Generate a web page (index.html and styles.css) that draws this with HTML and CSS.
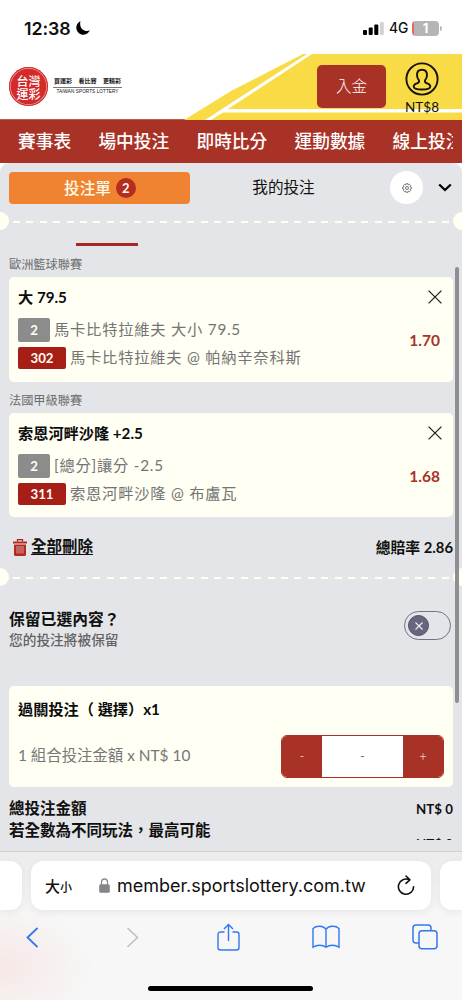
FILE: index.html
```html
<!DOCTYPE html>
<html lang="zh-Hant">
<head>
<meta charset="utf-8">
<title>台灣運彩</title>
<link rel="stylesheet" href="styles.css">
</head>
<body>
<div class="screen">
  <div class="status">
    <span class="clock">12:38</span>
    <svg class="moon" width="14" height="14" viewBox="0 0 14 14"><path d="M4.500.300A7 7 0 1 0 13.800 9.300C9.500 11.500 2.500 8 4.500.300Z"/></svg>
    <svg class="signal" width="21" height="14" viewBox="0 0 21 14"><rect y="9" width="4" height="5" rx="1"/><rect x="5.700" y="6.500" width="4" height="7.500" rx="1"/><rect x="11.300" y="3.500" width="4" height="10.500" rx="1"/><rect x="17" y="1" width="3.800" height="13" rx="1" fill="#d2d2d2"/></svg>
    <span class="net">4G</span>
    <span class="battery">1</span><span class="battery-cap"></span>
  </div>

  <header class="head">
    <svg class="head-bg" width="462" height="66" viewBox="0 0 462 66"><path d="M303 0H462V66H184L231 37Z" fill="#f9dc45"/><path d="M307 0H312L231 53L228 55H462V58.500H223L211 66H205Z" fill="#fff"/></svg>
    <div class="seal"><span>台灣</span><span>運彩</span></div>
    <div class="slogan"><div class="slogan-zh"><span>買運彩</span><span>看比賽</span><span>更精彩</span></div><div class="slogan-en">TAIWAN SPORTS LOTTERY</div></div>
    <button class="deposit">入金</button>
    <div class="account">
      <svg width="34" height="34" viewBox="0 0 34 34" fill="none" stroke="#15130b" stroke-width="1.900"><circle cx="17" cy="17" r="15.600"/><path d="M17 7.700c-3.100 0-5 2.200-5 5.300 0 2.700 1 4.200 2 5.400.4 1.600-.4 2.200-1.600 2.800-2 .9-3.700 1.400-3.700 3.300 0 2 4.300 3 8.300 3s8.300-1 8.300-3c0-1.900-1.700-2.400-3.700-3.300-1.200-.6-2-1.200-1.600-2.800 1-1.200 2-2.700 2-5.400 0-3.100-1.900-5.300-5-5.300Z"/></svg>
      <span>NT$8</span>
    </div>
  </header>

  <nav class="nav"><div class="nav-track"><span>賽事表</span><span>場中投注</span><span>即時比分</span><span>運動數據</span><span>線上投注</span></div></nav>

  <main class="panel">
    <div class="tabs">
      <div class="tab active">投注單<b class="count">2</b></div>
      <div class="tab">我的投注</div>
      <div class="gear"><svg width="10" height="10" viewBox="0 0 10 10" fill="none" stroke="#555" stroke-width=".8"><path d="M4.100.700h1.800l.3 1.200 1.200-.6 1.200 1.200-.6 1.200 1.300.4v1.800l-1.300.4.6 1.200-1.200 1.200-1.200-.6-.3 1.200H4.100l-.3-1.200-1.200.6-1.200-1.200.6-1.200L.7 5.900V4.100L2 3.700l-.6-1.200 1.200-1.200 1.200.6Z"/><circle cx="5" cy="5" r="1.500"/></svg></div>
      <svg class="chev" width="14" height="9" viewBox="0 0 14 9"><path d="M1.200 1.500 7 7 12.800 1.500" fill="none" stroke="#000" stroke-width="2.300"/></svg>
    </div>

    <div class="divider"><i></i></div>
    <div class="marker"></div>

    <div class="league">歐洲籃球聯賽</div>
    <section class="card bet">
      <div class="bet-info">
        <h3>大 79.5</h3>
        <div class="line"><b class="tag">2</b><span class="wide">馬卡比特拉維夫 大小 79.5</span></div>
        <div class="line"><b class="tag red">302</b><span class="wide">馬卡比特拉維夫 @ 帕納辛奈科斯</span></div>
      </div>
      <div class="bet-side">
        <svg width="14" height="14" viewBox="0 0 14 14"><path d="M.6.600 13.400 13.400M13.400.600.600 13.400" stroke="#222" stroke-width="1.300"/></svg>
        <span class="odds">1.70</span>
      </div>
    </section>

    <div class="league">法國甲級聯賽</div>
    <section class="card bet">
      <div class="bet-info">
        <h3>索恩河畔沙隆 +2.5</h3>
        <div class="line"><b class="tag">2</b><span class="wide">[總分]讓分 -2.5</span></div>
        <div class="line"><b class="tag red">311</b><span class="wide">索恩河畔沙隆 @ 布盧瓦</span></div>
      </div>
      <div class="bet-side">
        <svg width="14" height="14" viewBox="0 0 14 14"><path d="M.6.600 13.400 13.400M13.400.600.600 13.400" stroke="#222" stroke-width="1.300"/></svg>
        <span class="odds">1.68</span>
      </div>
    </section>

    <div class="summary">
      <svg width="14" height="17" viewBox="0 0 14 17"><path d="M4.500 2.500V.700h5v1.800" fill="none" stroke="#a62118" stroke-width="1.300"/><path d="M0 2.500h14v2H0Z M1 5.500h12V15.500q0 1.500-1.500 1.500h-9Q1 17 1 15.500Z" fill="#b22a20"/><path d="M4 7v7.500M6 7v7.500M8 7v7.500M10 7v7.500" stroke="#e5bab7" stroke-width=".8"/></svg>
      <span class="clear">全部刪除</span>
      <span class="total-odds">總賠率 2.86</span>
    </div>
    <div class="divider"><i></i></div>

    <div class="keep">
      <div><div class="keep-title">保留已選內容？</div><div class="keep-sub">您的投注將被保留</div></div>
      <div class="toggle"><span><svg width="8" height="8" viewBox="0 0 8 8"><path d="M.5.500l7 7M7.500.500l-7 7" stroke="#f2f2f5" stroke-width="1.100"/></svg></span></div>
    </div>

    <section class="card parlay">
      <h3>過關投注（ 選擇）x1</h3>
      <div class="stake"><span>1 組合投注金額 x NT$ 10</span>
        <div class="stepper"><button>-</button><div>-</div><button>+</button></div>
      </div>
    </section>

    <div class="totals">
      <div class="row"><span>總投注金額</span><span class="amount">NT$ 0</span></div>
      <div class="row low"><span>若全數為不同玩法，最高可能</span><span class="amount">NT$ 0</span></div>
    </div>
    <div class="scrollbar"></div>
  </main>

  <footer class="browser">
    <div class="address">
      <div class="peek left"></div>
      <div class="url">
        <span class="aa">大<small>小</small></span>
        <svg class="lock" width="11" height="15" viewBox="0 0 11 15"><path d="M2.500 7V4.300a3 3.300 0 0 1 6 0V7" fill="none" stroke="#8b8b8f" stroke-width="1.300"/><rect x=".2" y="6.200" width="10.600" height="8.500" rx="1.500" fill="#858589"/></svg>
        <span class="domain">member.sportslottery.com.tw</span>
        <svg class="reload" width="18" height="21" viewBox="0 0 18 21" fill="none" stroke="#111" stroke-width="1.600" stroke-linecap="round" stroke-linejoin="round"><path d="M12.200 4.800A7.600 7.600 0 1 0 16.600 11.700M9 1l3.900 3.800L9 8.300"/></svg>
      </div>
      <div class="peek right"></div>
    </div>
    <div class="tools">
      <svg width="13" height="21" viewBox="0 0 13 21"><path d="M11.500 1 1.500 10.500l10 9.500" stroke="#3478f0" stroke-width="1.800"/></svg>
      <svg class="t2" width="13" height="21" viewBox="0 0 13 21"><path d="M1.500 1l10 9.500L1.500 20" stroke="#bebec0" stroke-width="1.500"/></svg>
      <svg class="t3" width="23" height="28" viewBox="0 0 23 28"><path d="M7.500 9H3.500Q1 9 1 11.500v13Q1 27 3.500 27h16q2.500 0 2.500-2.500v-13Q22 9 19.500 9h-4M11.500 18V1.500M7 6l4.500-4.600L16 6" stroke="#3478f0" stroke-width="1.400"/></svg>
      <svg class="t4" width="28" height="24" viewBox="0 0 28 24"><path d="M14 4.500v17.700M14 4.500C11.500.500 4.500.300 1 3.500v18.700c4-2.700 9.500-2.700 13 0 3.500-2.700 9-2.700 13 0V3.500C23.500.300 16.500.500 14 4.500Z" stroke="#3478f0" stroke-width="1.400"/></svg>
      <svg class="t5" width="26" height="26" viewBox="0 0 26 26"><path d="M7 19H4Q1 19 1 16V4Q1 1 4 1h12q3 0 3 3v2.500" stroke="#3478f0" stroke-width="1.500"/><rect x="7" y="6.700" width="18" height="18" rx="3" stroke="#3478f0" stroke-width="1.500"/></svg>
    </div>
    <div class="home"></div>
  </footer>
</div>
</body>
</html>
```

FILE: styles.css
```css
* { box-sizing: border-box; }
body { margin: 0; background: #fff; font-family: Lato, "Noto Sans CJK TC", sans-serif; color: #111; }
h3 { margin: 0; font-size: 15.200px; line-height: 22px; font-weight: 700; color: #0c0c0c; }
button { border: 0; padding: 0; font: inherit; }
svg { flex: none; display: block; }
.screen { width: 462px; height: 1000px; overflow: hidden; display: flex; flex-direction: column; white-space: nowrap; }

.status { height: 54px; flex: none; display: flex; align-items: center; padding: 2px 20px 0 24px; font-family: Inter, sans-serif; }
.clock { font-size: 17.800px; font-weight: 600; width: 49px; letter-spacing: -.1px; }
.moon { margin-left: 3px; }
.signal { margin-left: auto; }
.net { font-size: 13.800px; font-weight: 500; margin-left: 5px; width: 23px; }
.battery { width: 27px; height: 15px; border-radius: 4px; background: linear-gradient(90deg, #e46a64 2px, #b5b5b5 2px); color: #fff; font-size: 13px; line-height: 15px; font-weight: 700; text-align: center; }
.battery-cap { width: 2px; height: 5px; margin-left: 1px; border-radius: 0 2px 2px 0; background: #bbb; }

.head { position: relative; height: 65px; flex: none; display: flex; align-items: flex-start; padding-left: 9px; }
.head > * { position: relative; }
.head > .head-bg { position: absolute; left: 0; top: 0; }
.seal { width: 39px; height: 39px; margin-top: 13px; border-radius: 50%; background: #d32a2a; box-shadow: inset 0 0 0 1px #d32a2a, inset 0 0 0 1.700px #eda5a5; color: #fff; font-family: "Noto Sans CJK TC", sans-serif; font-size: 12px; line-height: 13px; font-weight: 500; display: flex; flex-direction: column; align-items: center; justify-content: center; }
.slogan { width: 69px; margin: 22px 0 0 5px; }
.slogan-zh { display: flex; justify-content: space-between; font-size: 6px; line-height: 9px; font-weight: 700; padding: 0 1px 2px; border-bottom: 1px solid #777; }
.slogan-en { font-family: "Liberation Sans", sans-serif; font-size: 4.700px; line-height: 8px; letter-spacing: .05px; text-align: center; }
.deposit { width: 69px; height: 43px; margin: 11px 0 0 195px; border-radius: 5px; background: #a93226; color: #fff; font-size: 15.500px; line-height: 20px; padding-bottom: 2px; font-weight: 300; }
.account { width: 50px; margin: 8px 0 0 11px; display: flex; flex-direction: column; align-items: center; font-size: 13.500px; line-height: 20px; }
.account span { margin-top: 1px; }

.nav { height: 44px; flex: none; background: #a93226; border-top: 1px solid #b95f3a; color: #fff; font-size: 17.700px; line-height: 43px; font-weight: 500; padding: 0 9px 0 18px; }
.nav-track { overflow: hidden; display: flex; gap: 27.300px; }

.panel { position: relative; height: 688px; flex: none; background: #e4e5e8; border-radius: 9px 9px 0 0; overflow: hidden; }
.tabs { display: flex; align-items: center; height: 49px; padding-left: 9px; font-size: 15.600px; line-height: 20px; }
.tab { width: 187px; height: 32px; padding-bottom: 1px; display: flex; align-items: center; justify-content: center; }
.tab.active { width: 181px; background: #f08332; border-radius: 4px; color: #fffbe9; padding: 0 0 0 1px; font-weight: 500; }
.count { width: 20px; height: 20px; margin-left: 5px; border-radius: 50%; background: #b52c20; font-size: 13px; line-height: 20px; text-align: center; }
.gear { width: 33px; height: 33px; border-radius: 50%; background: #fff; display: flex; align-items: center; justify-content: center; margin-left: 13px; }
.chev { margin-left: 15px; }

.divider { height: 18px; display: flex; align-items: center; justify-content: space-between; }
.divider::before, .divider::after { content: ""; width: 9px; height: 18px; background: #fffff2; border-radius: 0 9px 9px 0; }
.divider::after { border-radius: 9px 0 0 9px; }
.divider i { width: 436px; height: 2px; margin-top: 1px; background: repeating-linear-gradient(90deg, #fffff2 0 7px, transparent 7px 13.400px); }
.marker { width: 62px; height: 3px; margin: 13px 0 0 76px; background: #a92722; }
.league { margin-top: 8px; height: 23px; line-height: 21px; padding-left: 9px; font-size: 12.200px; color: #6d6d70; }
.card { width: 444px; margin: 0 9px; border-radius: 5px; background: #fffff3; }
.bet { height: 104.500px; display: flex; justify-content: space-between; padding: 9px 11px 0 9px; }
.line { display: flex; align-items: center; font-size: 15.300px; line-height: 20px; height: 24px; color: #747474; gap: 4px; margin-top: 4px; }
h3 + .line { margin-top: 10px; }
.wide { letter-spacing: .75px; padding-bottom: 2px; }
.tag { width: 32px; height: 24px; border-radius: 2px; background: #8c8c8c; color: #fffff3; font-size: 13.200px; line-height: 24px; text-align: center; }
.tag.red { width: 48px; height: 22px; line-height: 22px; background: #a71e16; }
.bet-side { display: flex; flex-direction: column; align-items: flex-end; padding-top: 4px; }
.odds { margin: 24px 2px 0 0; color: #a93226; font-size: 15.500px; line-height: 24px; font-weight: 700; }

.summary { height: 51px; display: flex; align-items: center; padding: 9px 9px 0 13px; font-size: 15.500px; line-height: 20px; font-weight: 700; }
.clear { margin-left: 4px; padding-bottom: 2px; text-decoration: underline; text-underline-offset: 2px; }
.total-odds { margin-left: auto; padding-bottom: 1px; font-size: 14.800px; }
.keep { height: 100px; padding: 22px 11px 0 9px; display: flex; justify-content: space-between; }
.keep-title { font-size: 15.800px; line-height: 21px; font-weight: 700; }
.keep-sub { font-size: 13.700px; line-height: 21px; font-weight: 500; color: #626264; }
.toggle { width: 47px; height: 29px; margin-top: 3px; border: 1px solid #737087; border-radius: 15px; padding: 3px; }
.toggle span { display: flex; align-items: center; justify-content: center; width: 21px; height: 21px; border-radius: 50%; background: #68657f; border: 1px solid #504c6b; }
.parlay { height: 101px; padding: 12px 9px 0; }
.stake { display: flex; justify-content: space-between; align-items: center; height: 43px; margin-top: 15px; font-size: 15.400px; line-height: 20px; color: #777; }
.stake > span { padding-bottom: 3px; }
.stepper { display: grid; grid-template-columns: 40px 1fr 40px; width: 163px; height: 43px; border: 1px solid #a93226; border-radius: 6px; overflow: hidden; background: #fff; font-size: 13px; line-height: 41px; text-align: center; }
.stepper button { background: #a93226; color: #fff; font-weight: 300; }
.totals { height: 53px; padding-top: 10px; overflow: hidden; }
.row { display: flex; justify-content: space-between; height: 22px; padding: 0 9px; font-size: 15.500px; line-height: 22px; font-weight: 700; }
.amount { font-size: 13.300px; line-height: 24px; font-weight: 700; }
.low .amount { padding-top: 13px; }
.scrollbar { position: absolute; right: 3px; top: 104px; width: 4px; height: 436px; border-radius: 2px; background: #8e8f93; }

.browser { height: 149px; flex: none; border-top: 1px solid #cfcfd1; background: radial-gradient(ellipse 90px 65px at 5px 115px, #f6e8e7, transparent), linear-gradient(#ececed, #f7f7f7 65px); }
.address { display: flex; justify-content: space-between; padding-top: 9px; }
.url, .peek { height: 49px; background: #fff; border-radius: 12px; box-shadow: 0 2px 9px #0001; }
.peek.left { width: 22px; border-radius: 0 12px 12px 0; }
.peek.right { width: 22px; border-radius: 12px 0 0 12px; }
.url { width: 400px; display: flex; align-items: center; padding: 0 16px 0 14px; font-family: Inter, "Noto Sans CJK TC", sans-serif; }
.aa { width: 54px; font-size: 15px; font-weight: 500; }
.aa small { font-size: 12px; }
.domain { margin-left: 7px; font-size: 18px; letter-spacing: -.02px; }
.reload { margin-left: auto; }
.tools { display: flex; align-items: center; height: 54px; padding-left: 26px; fill: none; }
.t2 { margin-left: 87px; }
.t3 { margin-left: 78px; }
.t4 { margin-left: 72px; }
.t5 { margin-left: 72px; }
.home { width: 165px; height: 5px; margin: 22px auto 0 148px; border-radius: 3px; background: #000; }
```
